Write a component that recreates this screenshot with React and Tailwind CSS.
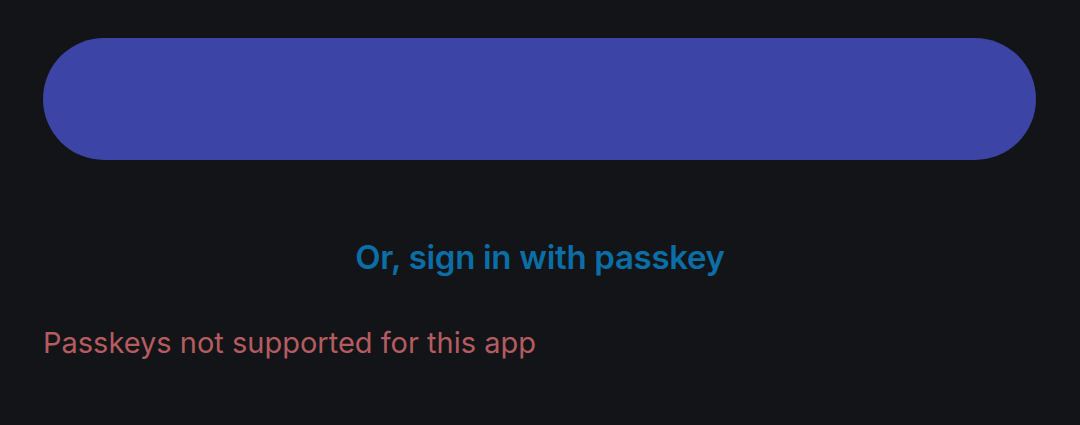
import React from 'react';

const App = () => {
    return (
        <div className="w-[1080px] h-[425px] bg-[#131418] px-[43px] pt-[38px] font-['Inter',sans-serif]">
            <button className="block w-[993px] h-[122px] rounded-full bg-[#3c44a6]" />
            <div className="mt-[72px] text-center text-[33px] leading-[50px] font-semibold text-[#0c6ea6] tracking-[-0.3px]">
                Or, sign in with passkey
            </div>
            <p className="mt-[42px] text-[29px] leading-[38px] text-[#b45c5f]">
                Passkeys not supported for this app
            </p>
        </div>
    );
};

export default App;
